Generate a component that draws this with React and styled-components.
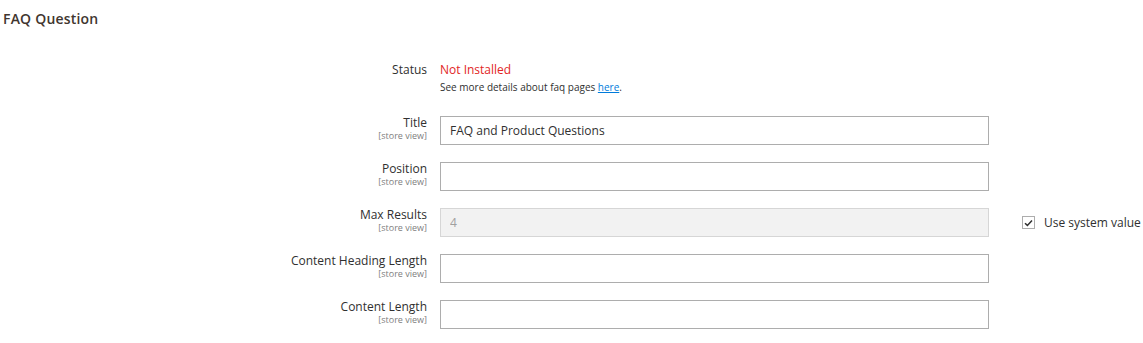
import React from "react";
import styled, { createGlobalStyle } from "styled-components";

const Global = createGlobalStyle`
  body { margin: 0; background: #fff; font-family: "Open Sans", "Liberation Sans", sans-serif; color: #303030; }
`;

const Page = styled.div`
  padding: 10px 0 0 3px;
  width: 1143px;
  box-sizing: border-box;
`;

const SectionTitle = styled.h2`
  margin: 0;
  font-size: 14px;
  font-weight: 600;
  color: #41362f;
  line-height: 18px;
  letter-spacing: 0.2px;
`;

const Form = styled.div`
  margin-top: 35px;
  display: grid;
  grid-template-columns: 437px 549px 33px auto;
  row-gap: 17px;
`;

const LabelCell = styled.div`
  text-align: right;
  padding-right: 13px;
`;

const LabelText = styled.div`
  font-size: 12px;
  line-height: 14px;
  color: #303030;
`;

const Scope = styled.div`
  font-size: 9px;
  line-height: 11px;
  color: #808080;
`;

const ValueCell = styled.div`
  display: flex;
  flex-direction: column;
`;

const StatusText = styled.div`
  font-size: 12px;
  line-height: 14px;
  color: #e22626;
`;

const Note = styled.div`
  font-size: 10px;
  line-height: 14px;
  color: #303030;
  margin-top: 3px;
  margin-bottom: 5px;
  a { color: #007bdb; text-decoration: underline; }
`;

const Input = styled.input`
  box-sizing: border-box;
  width: 549px;
  height: 29px;
  border: 1px solid ${(p) => (p.disabled ? "#d6d6d6" : "#adadad")};
  background: ${(p) => (p.disabled ? "#f2f2f2" : "#fff")};
  padding: 0 9px;
  font-family: "Open Sans", "Liberation Sans", sans-serif;
  font-size: 12px;
  color: ${(p) => (p.disabled ? "#a0a0a0" : "#303030")};
  outline: none;
  margin: 0;
  &:disabled { opacity: 1; }
`;

const UseDefault = styled.label`
  display: flex;
  align-items: center;
  gap: 9px;
  font-size: 12px;
  color: #303030;
  height: 29px;
  white-space: nowrap;
`;

const Box = styled.span`
  width: 11px;
  height: 11px;
  border: 1px solid #adadad;
  display: inline-flex;
  align-items: center;
  justify-content: center;
  background: #fff;
`;

const Empty = styled.div``;

const fields = [
  { label: "Title", value: "FAQ and Product Questions" },
  { label: "Position", value: "" },
  { label: "Max Results", value: "4", disabled: true, useDefault: true },
  { label: "Content Heading Length", value: "" },
  { label: "Content Length", value: "" },
];

export default function App() {
  return (
    <>
      <Global />
      <Page>
        <SectionTitle>FAQ Question</SectionTitle>
        <Form>
          <LabelCell>
            <LabelText>Status</LabelText>
          </LabelCell>
          <ValueCell>
            <StatusText>Not Installed</StatusText>
            <Note>
              See more details about faq pages <a href="#">here</a>.
            </Note>
          </ValueCell>
          <Empty />
          <Empty />
          {fields.map((f) => (
            <React.Fragment key={f.label}>
              <LabelCell>
                <LabelText>{f.label}</LabelText>
                <Scope>[store view]</Scope>
              </LabelCell>
              <ValueCell>
                <Input readOnly disabled={f.disabled} value={f.value} />
              </ValueCell>
              <Empty />
              {f.useDefault ? (
                <UseDefault>
                  <Box>
                    <svg width="9" height="8" viewBox="0 0 9 8">
                      <path d="M1 4.2 L3.4 6.4 L8 1.4" fill="none" stroke="#303030" strokeWidth="1.5" />
                    </svg>
                  </Box>
                  Use system value
                </UseDefault>
              ) : (
                <Empty />
              )}
            </React.Fragment>
          ))}
        </Form>
      </Page>
    </>
  );
}
